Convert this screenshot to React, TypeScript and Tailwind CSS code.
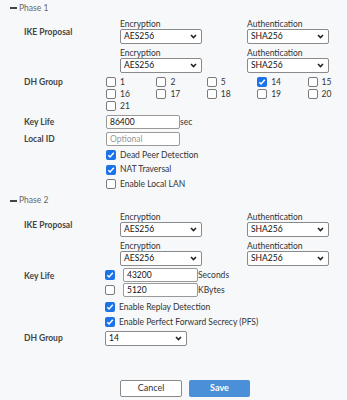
import React from 'react';

const Chevron: React.FC = () => (
  <svg width="7" height="5" viewBox="0 0 7 5" className="shrink-0">
    <path d="M1 1l2.5 2.5L6 1" fill="none" stroke="#222" strokeWidth="1.6" />
  </svg>
);

const Select: React.FC<{ value: string }> = ({ value }) => (
  <div className="flex items-center justify-between w-[82px] h-[15px] border border-[#8a8a8a] rounded-[2px] bg-white pl-[3px] pr-[4px] text-[8.5px] text-[#111]">
    <span>{value}</span>
    <Chevron />
  </div>
);

const Box: React.FC<{ checked?: boolean }> = ({ checked }) =>
  checked ? (
    <span className="flex items-center justify-center w-[10px] h-[10px] rounded-[2px] bg-[#1a73e8] shrink-0">
      <svg width="8" height="8" viewBox="0 0 8 8">
        <path d="M1.3 4.2l1.8 1.8L6.8 1.8" fill="none" stroke="white" strokeWidth="1.5" />
      </svg>
    </span>
  ) : (
    <span className="block w-[10px] h-[10px] rounded-[2px] border border-[#7a7a7a] bg-white shrink-0" />
  );

const Heading: React.FC<{ title: string }> = ({ title }) => (
  <div className="flex items-center h-[16px] pl-[10px] gap-[2px]">
    <span className="block w-[7px] h-[2px] bg-[#444]" />
    <span className="text-[8.5px] text-[#666]">{title}</span>
  </div>
);

const Label: React.FC<{ children: React.ReactNode; className?: string }> = ({ children, className = '' }) => (
  <div className={`w-[82px] shrink-0 text-[8.5px] font-bold text-[#444] leading-[10px] ${className}`}>{children}</div>
);

const IkeProposal: React.FC = () => (
  <div className="flex mt-[3px]">
    <Label className="mt-[8px]">IKE Proposal</Label>
    <div className="flex flex-col gap-[4px] pl-[14px]">
      {[0, 1].map((i) => (
        <div key={i} className="flex gap-[45px]">
          <div>
            <div className="h-[10px] leading-[10px] text-[8.5px] text-[#333]">Encryption</div>
            <Select value="AES256" />
          </div>
          <div>
            <div className="h-[10px] leading-[10px] text-[8.5px] text-[#333]">Authentication</div>
            <Select value="SHA256" />
          </div>
        </div>
      ))}
    </div>
  </div>
);

const CheckRow: React.FC<{ checked?: boolean; label: string; h?: string }> = ({ checked, label, h = 'h-[14.5px]' }) => (
  <div className={`flex items-center gap-[4px] ${h}`}>
    <Box checked={checked} />
    <span className="text-[8.5px] text-[#333]">{label}</span>
  </div>
);

const groups = ['1', '2', '5', '14', '15', '16', '17', '18', '19', '20', '21'];

const Input: React.FC<{ value?: string; placeholder?: string; w: string }> = ({ value, placeholder, w }) => (
  <div className={`flex items-center h-[14px] ${w} border border-[#9a9a9a] rounded-[2px] bg-white px-[3px] text-[8.5px]`}>
    {value ? <span className="text-[#111]">{value}</span> : <span className="text-[#999]">{placeholder}</span>}
  </div>
);

const App: React.FC = () => {
  return (
    <div className="w-[347px] h-[400px] bg-[#f7f8fa] font-[Lato,sans-serif] overflow-hidden">
      <Heading title="Phase 1" />
      <div className="pl-[24px]">
        <IkeProposal />

        <div className="flex mt-[3px]">
          <Label className="mt-[1px]">DH Group</Label>
          <div className="grid grid-cols-[repeat(5,50.4px)]">
            {groups.map((g) => (
              <div key={g} className="flex items-center gap-[4px] h-[12px]">
                <Box checked={g === '14'} />
                <span className="text-[8.5px] text-[#333]">{g}</span>
              </div>
            ))}
          </div>
        </div>

        <div className="flex items-center mt-[3px]">
          <Label>Key Life</Label>
          <Input value="86400" w="w-[74px]" />
          <span className="text-[8.5px] text-[#333]">sec</span>
        </div>

        <div className="flex items-center mt-[3px]">
          <Label>Local ID</Label>
          <Input placeholder="Optional" w="w-[74px]" />
        </div>

        <div className="pl-[82px] mt-[2px]">
          <CheckRow checked label="Dead Peer Detection" />
          <CheckRow checked label="NAT Traversal" />
          <CheckRow label="Enable Local LAN" />
        </div>
      </div>

      <div className="mt-[1px]">
        <Heading title="Phase 2" />
      </div>
      <div className="pl-[24px]">
        <IkeProposal />

        <div className="flex mt-[2px]">
          <Label className="mt-[3px]">Key Life</Label>
          <div className="flex flex-col -ml-[1px]">
            <div className="flex items-center h-[15px]">
              <Box checked />
              <div className="ml-[8px]">
                <Input value="43200" w="w-[75px]" />
              </div>
              <span className="text-[8.5px] text-[#333]">Seconds</span>
            </div>
            <div className="flex items-center h-[15px]">
              <Box />
              <div className="ml-[8px]">
                <Input value="5120" w="w-[75px]" />
              </div>
              <span className="text-[8.5px] text-[#333]">KBytes</span>
            </div>
          </div>
        </div>

        <div className="pl-[81px] mt-[2px]">
          <CheckRow checked label="Enable Replay Detection" h="h-[15px]" />
          <CheckRow checked label="Enable Perfect Forward Secrecy (PFS)" h="h-[15px]" />
        </div>

        <div className="flex items-center mt-[1px]">
          <Label>DH Group</Label>
          <div className="-ml-[1px]">
            <Select value="14" />
          </div>
        </div>
      </div>

      <div className="flex justify-start gap-[7px] pl-[120px] mt-[34px]">
        <button className="w-[62px] h-[17px] border border-[#8a8a8a] rounded-[2px] bg-white text-[9px] text-[#333]">
          Cancel
        </button>
        <button className="w-[61px] h-[17px] rounded-[2px] bg-[#4a8fd8] text-[9px] font-bold text-white">
          Save
        </button>
      </div>
    </div>
  );
};

export default App;
